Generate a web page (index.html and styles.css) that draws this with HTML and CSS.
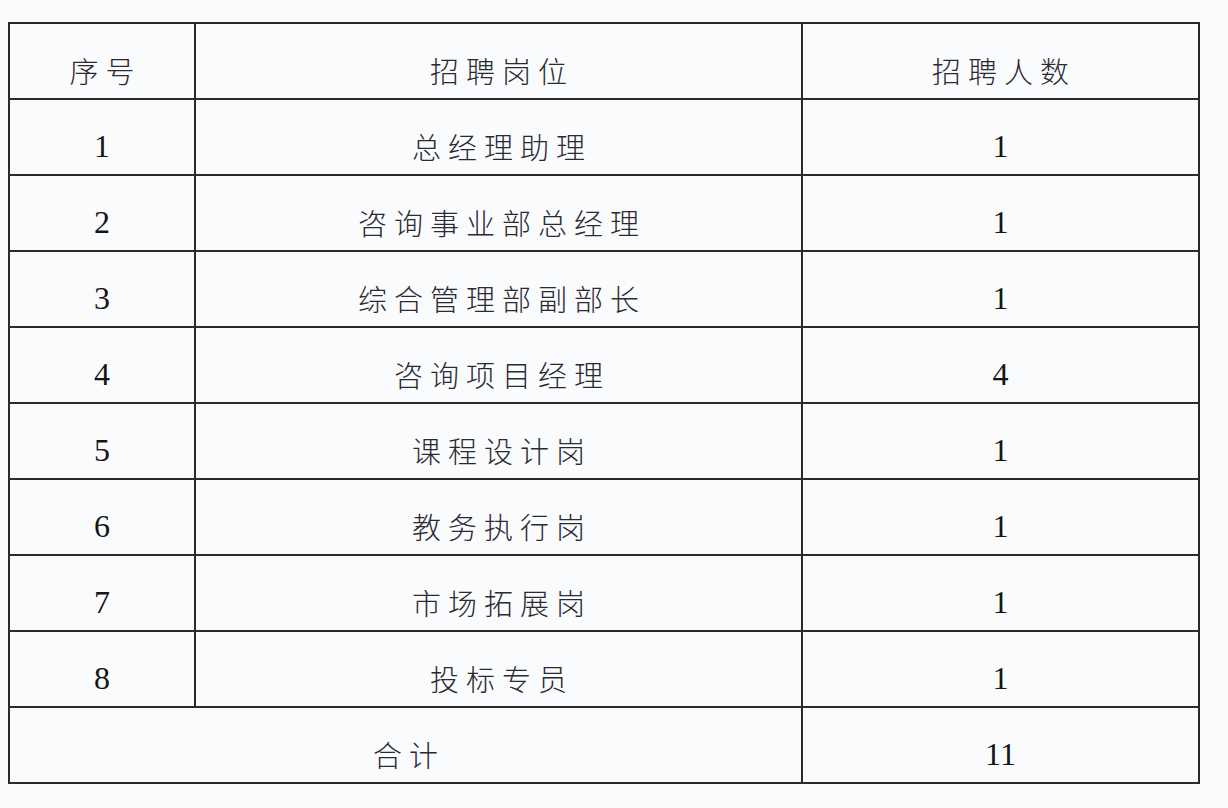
FILE: index.html
```html
<!DOCTYPE html>
<html lang="zh-CN">
<head>
<meta charset="utf-8">
<link rel="stylesheet" href="styles.css">
</head>
<body>
<div class="page">
<table class="jobs">
  <colgroup><col class="c1"><col class="c2"><col class="c3"></colgroup>
  <tr class="head"><td class="zh">序号</td><td class="zh">招聘岗位</td><td class="zh">招聘人数</td></tr>
  <tr><td class="num">1</td><td class="zh">总经理助理</td><td class="num">1</td></tr>
  <tr><td class="num">2</td><td class="zh">咨询事业部总经理</td><td class="num">1</td></tr>
  <tr><td class="num">3</td><td class="zh">综合管理部副部长</td><td class="num">1</td></tr>
  <tr><td class="num">4</td><td class="zh">咨询项目经理</td><td class="num">4</td></tr>
  <tr><td class="num">5</td><td class="zh">课程设计岗</td><td class="num">1</td></tr>
  <tr><td class="num">6</td><td class="zh">教务执行岗</td><td class="num">1</td></tr>
  <tr><td class="num">7</td><td class="zh">市场拓展岗</td><td class="num">1</td></tr>
  <tr><td class="num">8</td><td class="zh">投标专员</td><td class="num">1</td></tr>
  <tr><td class="zh" colspan="2">合计</td><td class="num">11</td></tr>
</table>
</div>
</body>
</html>
```
FILE: styles.css
```css
html, body {
  margin: 0;
  padding: 0;
  background: #fafbfd;
}
.page {
  padding: 22px 0 0 8px;
}
.jobs {
  border-collapse: collapse;
  table-layout: fixed;
  width: 1190px;
  border: 2px solid #2a2a2a;
}
.c1 { width: 186px; }
.c2 { width: 607px; }
.c3 { width: 397px; }
.jobs td {
  border: 2px solid #2a2a2a;
  height: 76px;
  padding: 18px 0 0 0;
  box-sizing: border-box;
  text-align: center;
  vertical-align: middle;
}
.zh {
  font-family: "Noto Sans CJK SC", sans-serif;
  font-weight: 300;
  font-size: 29px;
  letter-spacing: 7px;
  text-indent: 7px;
  color: #2a2a32;
}
.num {
  font-family: "Liberation Serif", serif;
  font-size: 32px;
  color: #151515;
}
```
